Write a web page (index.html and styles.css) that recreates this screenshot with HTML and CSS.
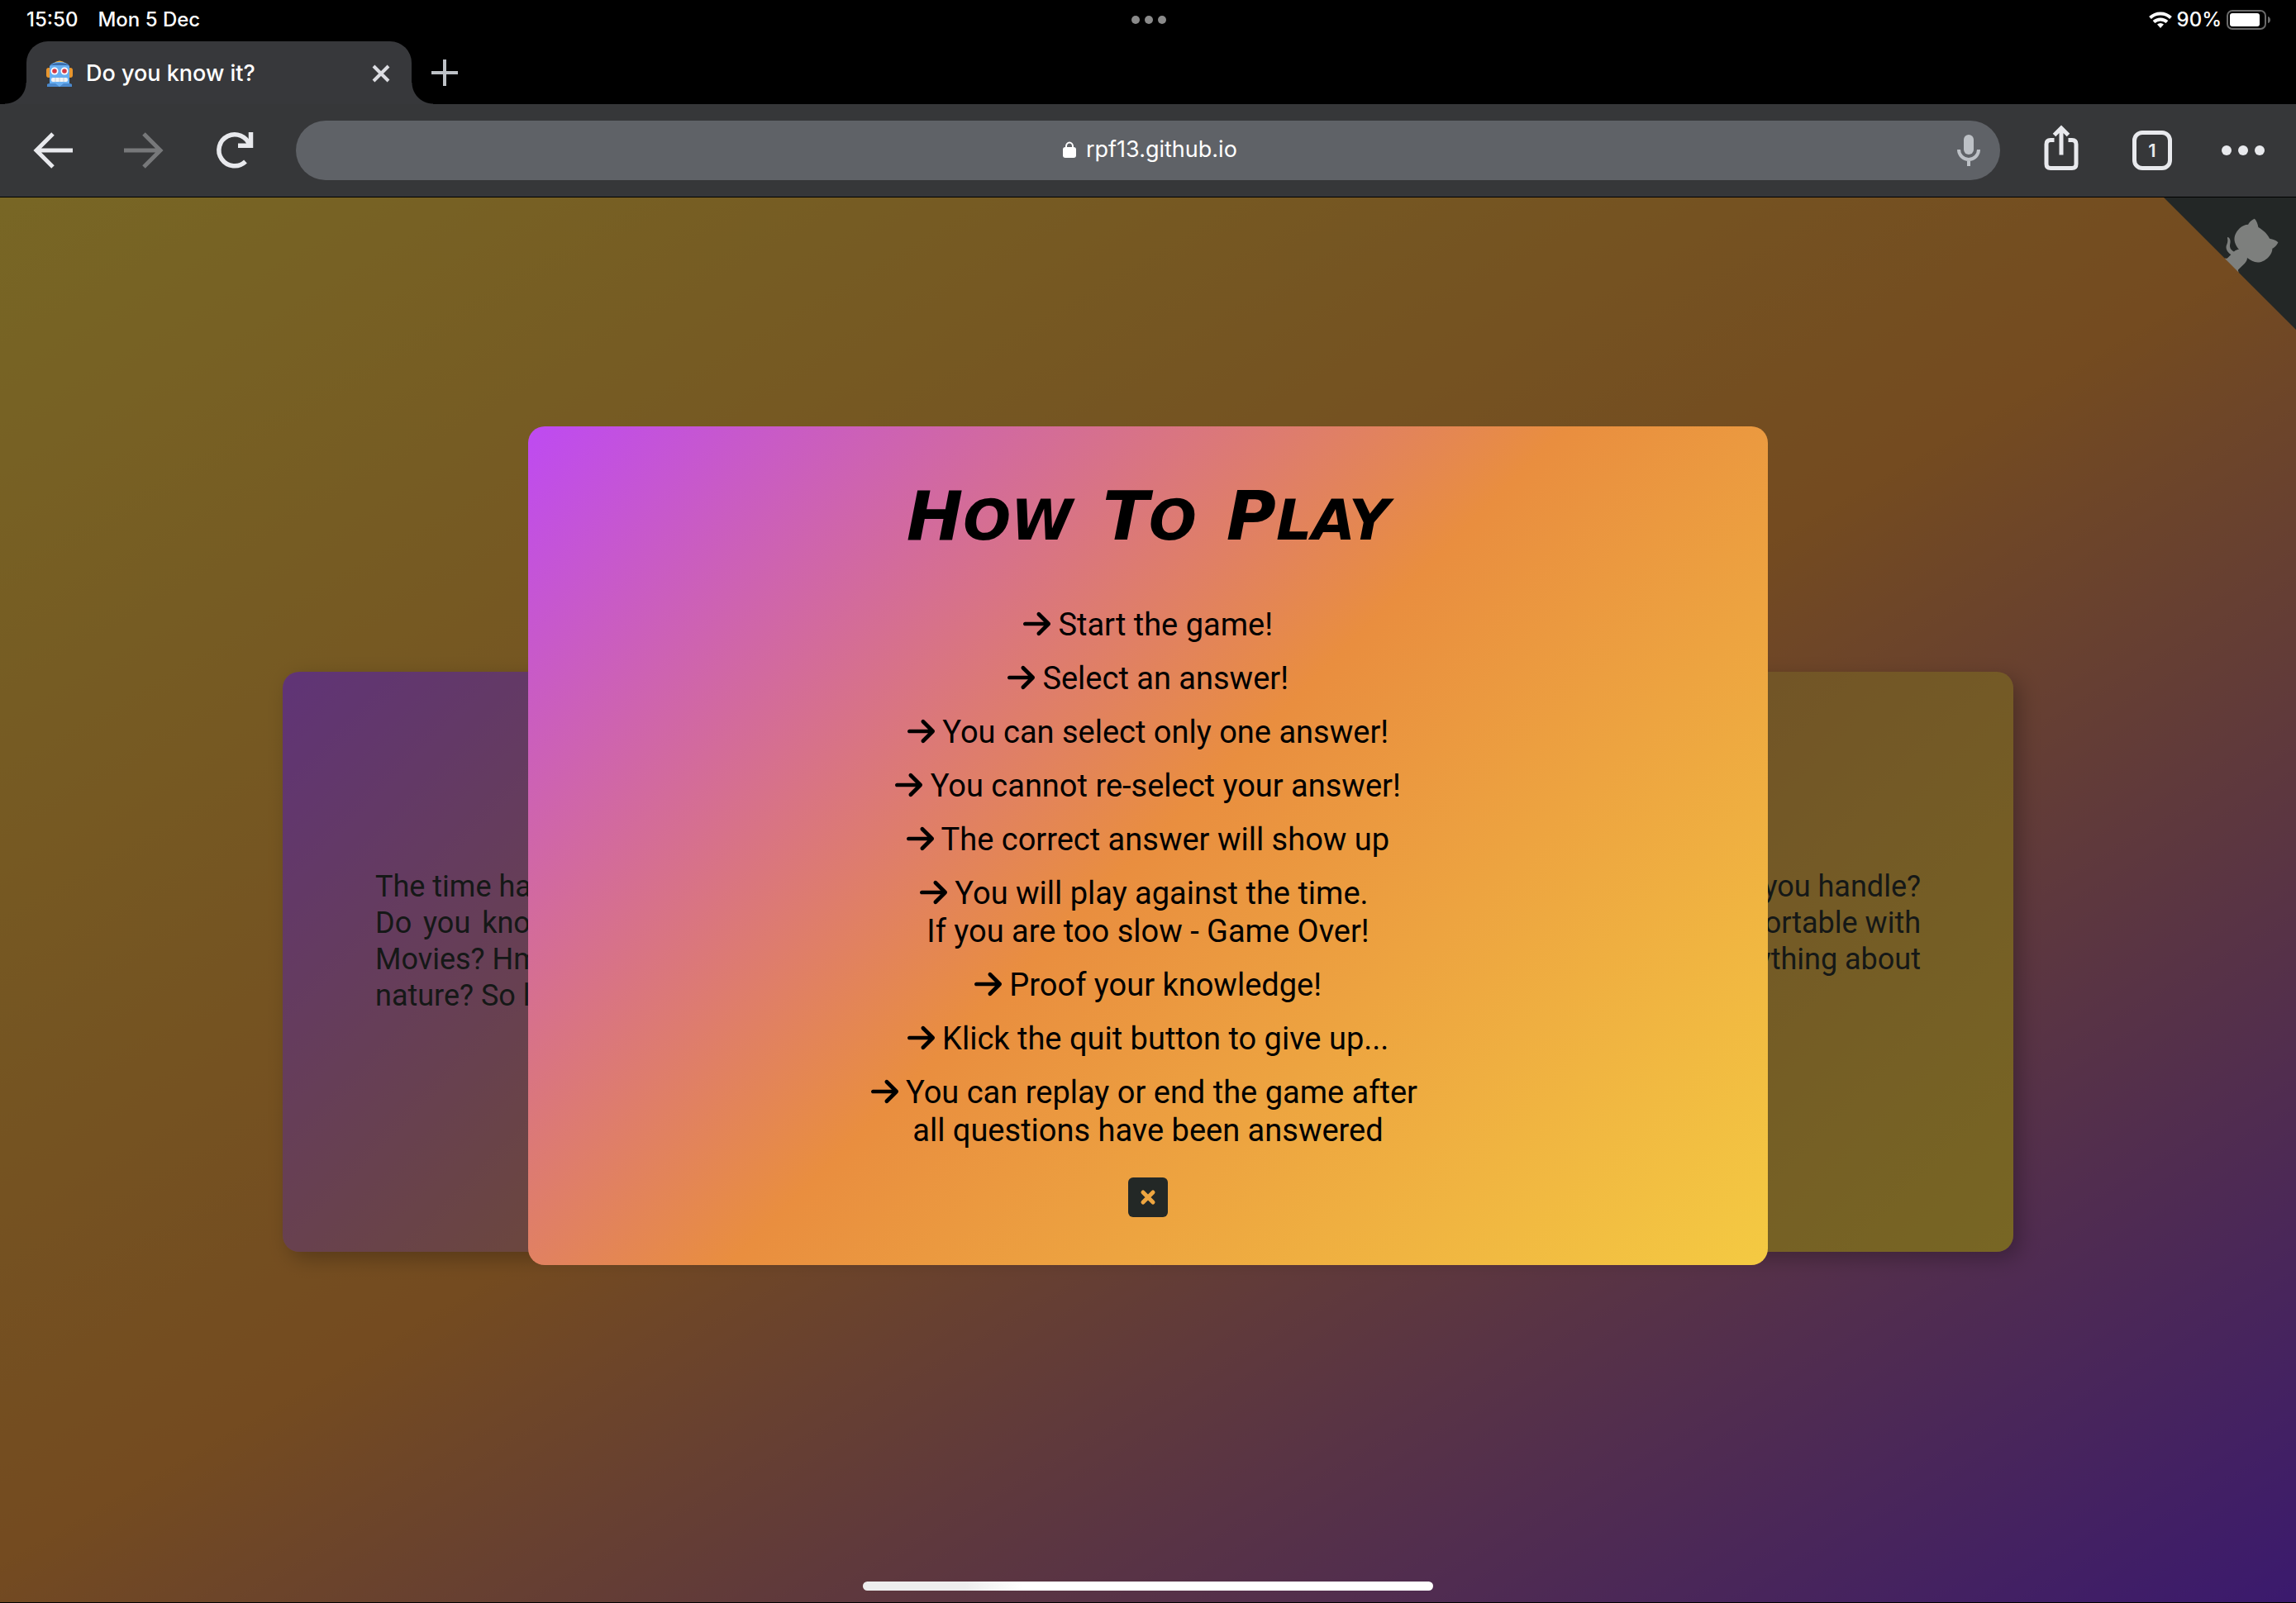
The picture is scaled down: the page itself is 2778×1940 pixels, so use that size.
FILE: index.html
```html
<!DOCTYPE html>
<html lang="en">
<head>
<meta charset="utf-8">
<title>Do you know it?</title>
<link rel="stylesheet" href="styles.css">
</head>
<body>
<header class="status">
  <div class="status-side"><span>15:50</span><span>Mon 5 Dec</span></div>
  <div class="status-dots"><i></i><i></i><i></i></div>
  <div class="status-side status-right">
    <svg class="wifi" viewBox="0 0 28 20" fill="none" stroke="#fff" stroke-width="4"><path d="M1.500 7.500a18 18 0 0 1 25 0M6 12.500a12 12 0 0 1 16 0"/><path d="M14 20l-4-4.500a6 6 0 0 1 8 0z" fill="#fff" stroke="none"/></svg>
    <span>90%</span>
    <svg class="battery" viewBox="0 0 54 24"><rect x="1" y="1" width="46" height="22" rx="6" fill="none" stroke="#6b6b6b" stroke-width="2"/><rect x="4" y="4" width="36" height="16" rx="3" fill="#fff"/><path d="M50 8c4 1 4 7 0 8z" fill="#6b6b6b"/></svg>
  </div>
</header>
<nav class="tabs">
  <div class="tab">
    <svg class="robot" viewBox="0 0 32 32"><rect x="0" y="9" width="6" height="12" rx="3" fill="#e8962e"/><rect x="26" y="9" width="6" height="12" rx="3" fill="#e8962e"/><path d="M8 4q8-7 16 0z" fill="#f0ac3c"/><path d="M4 7q3-5 12-5t12 5v22H4z" fill="#68aef0"/><path d="M4 7q3-4 12-4t12 4l-2-1H6z" fill="#3b6fae"/><path d="M1 32v-3q1-1 3-1h24q2 0 3 1v3z" fill="#4a88cc"/><path d="M11 28h10l-5 4z" fill="#68aef0"/><circle cx="10" cy="13" r="4.500" fill="#fff"/><circle cx="22" cy="13" r="4.500" fill="#fff"/><circle cx="10" cy="13" r="2.800" fill="#d53a45"/><circle cx="22" cy="13" r="2.800" fill="#d53a45"/><rect x="6" y="21" width="20" height="5" rx="2" fill="#f3f3f3"/><path d="M11 21v5M16 21v5M21 21v5" stroke="#c5cdd6" stroke-width="1"/></svg>
    <span class="tab-title">Do you know it?</span>
    <button class="icon-button" aria-label="Close tab"><svg class="tab-close" viewBox="0 0 22 22" stroke="#dcdde2" stroke-width="4"><path d="M2 2l18 18M20 2L2 20"/></svg></button>
  </div>
  <button class="icon-button" aria-label="New tab"><svg class="plus" viewBox="0 0 32 32" stroke="#bdc1c6" stroke-width="4"><path d="M16 0v32M0 16h32"/></svg></button>
</nav>
<div class="toolbar">
  <div class="tools">
    <button class="icon-button" aria-label="Back"><svg class="tool" viewBox="0 0 48 48" fill="none" stroke="#e8e9ed" stroke-width="5"><path d="M48 24H4M24 4L4 24l20 20"/></svg></button>
    <button class="icon-button" aria-label="Forward"><svg class="tool" viewBox="0 0 48 48" fill="none" stroke="#77787a" stroke-width="5"><path d="M0 24h44M24 4l20 20-20 20"/></svg></button>
    <button class="icon-button" aria-label="Reload"><svg class="tool" viewBox="0 0 48 48" fill="none" stroke="#e8e9ed" stroke-width="5.500"><path d="M37 37.500A19 19 0 1 1 42 18"/><path d="M43.500 2v16.200H28"/></svg></button>
  </div>
  <div class="omnibox">
    <label class="address">
      <svg class="lock" viewBox="0 0 16 20"><rect y="7" width="16" height="13" rx="3" fill="#fff"/><path d="M4 9V6a4 4.500 0 0 1 8 0v3" fill="none" stroke="#fff" stroke-width="2"/></svg>
      <input class="url" type="text" value="rpf13.github.io" aria-label="Address">
    </label>
    <button class="icon-button" aria-label="Voice search"><svg class="mic" viewBox="0 0 28 38"><rect x="8" width="12" height="24" rx="6" fill="#bdc1c6"/><path d="M2 18a12 12 0 0 0 24 0M14 30v8" fill="none" stroke="#bdc1c6" stroke-width="4"/></svg></button>
  </div>
  <div class="tools">
    <button class="icon-button" aria-label="Share"><svg class="tool" viewBox="0 0 48 48" fill="none" stroke="#e8e9ed" stroke-width="5"><path d="M15.500 11.500H11q-5 0-5 5v24q0 5 5 5h26q5 0 5-5v-24q0-5-5-5h-4.500"/><path d="M24 29.500V-3M15.500 5.500L24-3l8.500 8.500"/></svg></button>
    <button class="icon-button tab-count" aria-label="Open tabs">1</button>
    <button class="icon-button" aria-label="More"><svg class="tool" viewBox="0 0 48 48" fill="#e8e9ed"><circle cx="4" cy="24" r="6"/><circle cx="24" cy="24" r="6"/><circle cx="44" cy="24" r="6"/></svg></button>
  </div>
</div>
<main class="page">
  <section class="intro">
    <p class="intro-text">The time has come to prove it!<br>Do you know all about Sports or Movies? Hmm, or maybe about<br>nature? So let us start now!</p>
    <p class="intro-text intro-right">How much can you handle?<br>Are you comfortable with<br>it, or with anything about</p>
  </section>
  <a class="github" href="https://github.com/" aria-label="View source on GitHub">
    <svg class="github-art" viewBox="0 0 250 250"><path fill="#464e4c" d="M0 0l115 115h15l12 27 108 108V0z"/><g fill="#fafffb"><path d="M128.300 109C113.800 99.700 119 89.600 119 89.600 122 82.700 120.500 78.600 120.500 78.600 119.200 72 123.400 76.300 123.400 76.300 127.300 80.900 125.500 87.300 125.500 87.300 122.900 97.600 130.600 101.900 134.400 103.200"/><path d="M115 115C114.900 115.100 118.700 116.500 119.800 115.400L133.700 101.600C136.900 99.200 139.900 98.400 142.200 98.600 133.800 88 127.500 74.400 143.800 58 148.500 53.400 154 51.200 159.700 51 160.300 49.400 163.200 43.600 171.400 40.100 171.400 40.100 176.100 42.500 178.800 56.200 183.100 58.600 187.200 61.800 190.900 65.400 194.500 69 197.700 73.200 200.100 77.600 213.800 80.200 216.300 84.900 216.300 84.900 212.700 93.100 206.900 96 205.400 96.600 205.100 102.400 203 107.800 198.300 112.500 181.900 128.900 168.300 122.500 157.700 114.100 157.900 116.900 156.700 120.900 152.700 124.900L141 136.500C139.800 137.700 141.600 141.900 141.800 141.800z"/></g></svg>
  </a>
  <div class="overlay">
    <section class="modal" role="dialog" aria-labelledby="modal-title">
      <h1 class="modal-title" id="modal-title"><span class="word">How</span> <span class="word">To</span> <span class="word">Play</span></h1>
      <ul class="rules">
        <li><svg class="arrow" viewBox="0 0 448 512"><path id="arrow" d="M438.600 278.600c12.500-12.500 12.500-32.800 0-45.300l-160-160c-12.500-12.500-32.800-12.500-45.300 0s-12.500 32.800 0 45.300L338.800 224H32c-17.700 0-32 14.300-32 32s14.300 32 32 32h306.700L233.400 393.400c-12.500 12.500-12.500 32.800 0 45.300s32.800 12.500 45.300 0l160-160z"/></svg> Start the game!</li>
        <li><svg class="arrow" viewBox="0 0 448 512"><use href="#arrow"/></svg> Select an answer!</li>
        <li><svg class="arrow" viewBox="0 0 448 512"><use href="#arrow"/></svg> You can select only one answer!</li>
        <li><svg class="arrow" viewBox="0 0 448 512"><use href="#arrow"/></svg> You cannot re-select your answer!</li>
        <li><svg class="arrow" viewBox="0 0 448 512"><use href="#arrow"/></svg> The correct answer will show up</li>
        <li><svg class="arrow" viewBox="0 0 448 512"><use href="#arrow"/></svg> You will play against the time.&nbsp;<br>If you are too slow - Game Over!</li>
        <li><svg class="arrow" viewBox="0 0 448 512"><use href="#arrow"/></svg> Proof your knowledge!</li>
        <li><svg class="arrow" viewBox="0 0 448 512"><use href="#arrow"/></svg> Klick the quit button to give up...</li>
        <li><svg class="arrow" viewBox="0 0 448 512"><use href="#arrow"/></svg> You can replay or end the game after&nbsp;<br>all questions have been answered</li>
      </ul>
      <button class="close" aria-label="Close"><svg class="close-mark" viewBox="0 0 18 18" stroke="#eda540" stroke-width="5" stroke-linecap="round"><path d="M3 3l12 12M15 3L3 15"/></svg></button>
    </section>
  </div>
  <div class="home-bar"></div>
</main>
</body>
</html>
```
FILE: styles.css
```css
* { box-sizing: border-box; }

body {
  margin: 0;
  min-height: 100vh;
  display: flex;
  flex-direction: column;
  background: #000;
  color: #fff;
  font-family: Inter, "Liberation Sans", sans-serif;
}

svg { display: block; overflow: visible; }

.icon-button {
  display: flex;
  align-items: center;
  justify-content: center;
  padding: 0;
  border: 0;
  background: none;
}

/* Status bar */
.status {
  display: grid;
  grid-template-columns: 1fr auto 1fr;
  align-items: center;
  height: 50px;
  padding: 0 30px 2px 32px;
  font-size: 24px;
  font-weight: 500;
  line-height: 28px;
}
.status-side { display: flex; align-items: center; gap: 24px; }
.status-right { justify-content: flex-end; gap: 6px; }
.status-dots { display: flex; gap: 6px; }
.status-dots i { width: 10px; height: 10px; border-radius: 50%; background: #8a8a8a; }
.wifi { width: 28px; height: 20px; }
.battery { width: 54px; height: 24px; }

/* Tab strip */
.tabs {
  display: flex;
  align-items: center;
  gap: 24px;
  height: 76px;
  padding-left: 32px;
}
.tab {
  position: relative;
  display: flex;
  align-items: center;
  gap: 16px;
  width: 466px;
  height: 76px;
  padding: 2px 26px 0 24px;
  border-radius: 26px 26px 0 0;
  background: #37383b;
}
.tab::before,
.tab::after {
  content: "";
  position: absolute;
  bottom: 0;
  width: 26px;
  height: 26px;
}
.tab::before { right: 100%; background: radial-gradient(circle at 0 0, transparent 25px, #37383b 26px); }
.tab::after { left: 100%; background: radial-gradient(circle at 100% 0, transparent 25px, #37383b 26px); }
.robot { width: 32px; height: 32px; }
.tab-title { flex: 1; font-size: 27px; font-weight: 500; line-height: 32px; }
.tab-close { width: 22px; height: 22px; }
.plus { width: 32px; height: 32px; }

/* Toolbar */
.toolbar {
  display: flex;
  align-items: center;
  gap: 50px;
  height: 112px;
  padding: 0 40px;
  background: #363739;
}
.tools { display: flex; align-items: center; gap: 62px; }
.tool { width: 48px; height: 48px; }
.omnibox {
  flex: 1;
  display: flex;
  align-items: center;
  height: 72px;
  padding: 0 24px;
  border-radius: 36px;
  background: #5f6267;
}
.address {
  flex: 1;
  display: flex;
  align-items: center;
  justify-content: center;
  gap: 12px;
  padding: 0 0 2px 40px;
}
.lock { width: 16px; height: 20px; }
.url {
  width: 190px;
  padding: 0;
  border: 0;
  background: none;
  color: #fff;
  font: 27px/32px Inter, "Liberation Sans", sans-serif;
}
.mic { width: 28px; height: 38px; }
.tab-count {
  width: 48px;
  height: 48px;
  border: 5px solid #e8e9ed;
  border-radius: 12px;
  color: #e8e9ed;
  font: 600 22px/24px Inter, "Liberation Sans", sans-serif;
}

/* Game page */
.page {
  position: relative;
  flex: 1;
  display: flex;
  align-items: center;
  justify-content: center;
  margin: 1px 0;
  padding-top: 150px;
  background: linear-gradient(150deg, #f0cd4a, #e89640, #7634dc);
  font-family: Roboto, "Liberation Sans", sans-serif;
  overflow: hidden;
}
.intro {
  display: flex;
  justify-content: space-between;
  width: 2094px;
  max-width: 76%;
  min-height: 702px;
  padding: 238px 112px;
  border-radius: 20px;
  background: linear-gradient(135deg, #c068ee, #e09c50, #f0cd48);
  box-shadow: 8px 8px 24px rgba(0, 0, 0, 0.25);
  color: #2a302e;
}
.intro-text {
  width: 538px;
  margin: 0;
  font-size: 36px;
  line-height: 44px;
  text-align: justify;
}
.intro-right { text-align: right; }
.github { position: absolute; top: 0; right: 0; }
.github-art { width: 160px; height: 160px; overflow: hidden; }

/* Rules dialog */
.overlay {
  position: absolute;
  inset: 0;
  display: flex;
  flex-direction: column;
  align-items: center;
  padding-top: 277px;
  background: rgba(0, 0, 0, 0.5);
}
.modal {
  display: flex;
  flex-direction: column;
  align-items: center;
  width: 54%;
  padding: 61px 40px 58px;
  border-radius: 20px;
  background: linear-gradient(135deg, #be4af2, #e98e3f, #f4ca42);
  color: #000;
}
.modal-title {
  display: flex;
  align-items: center;
  gap: 36px;
  height: 100px;
  margin: 0 0 56px;
  font-family: "Permanent Marker", "DejaVu Sans", sans-serif;
  font-size: 68px;
  font-style: italic;
  font-weight: 700;
  line-height: 100px;
  text-transform: uppercase;
}
.word::first-letter { font-size: 82px; }
.rules {
  display: flex;
  flex-direction: column;
  gap: 19px;
  margin: 0 0 34px;
  padding: 0;
  list-style: none;
  font-size: 38px;
  line-height: 46px;
  text-align: center;
}
.arrow {
  display: inline-block;
  width: 33px;
  height: 38px;
  vertical-align: -5px;
}
.close {
  display: flex;
  align-items: center;
  justify-content: center;
  width: 48px;
  height: 48px;
  padding: 0;
  border: 0;
  border-radius: 6px;
  background: #232826;
}
.close-mark { width: 18px; height: 18px; }

.home-bar {
  position: absolute;
  bottom: 14px;
  left: 50%;
  width: 690px;
  height: 11px;
  margin-left: -345px;
  border-radius: 6px;
  background: linear-gradient(90deg, #eee 18%, #fff 28%);
}
```
